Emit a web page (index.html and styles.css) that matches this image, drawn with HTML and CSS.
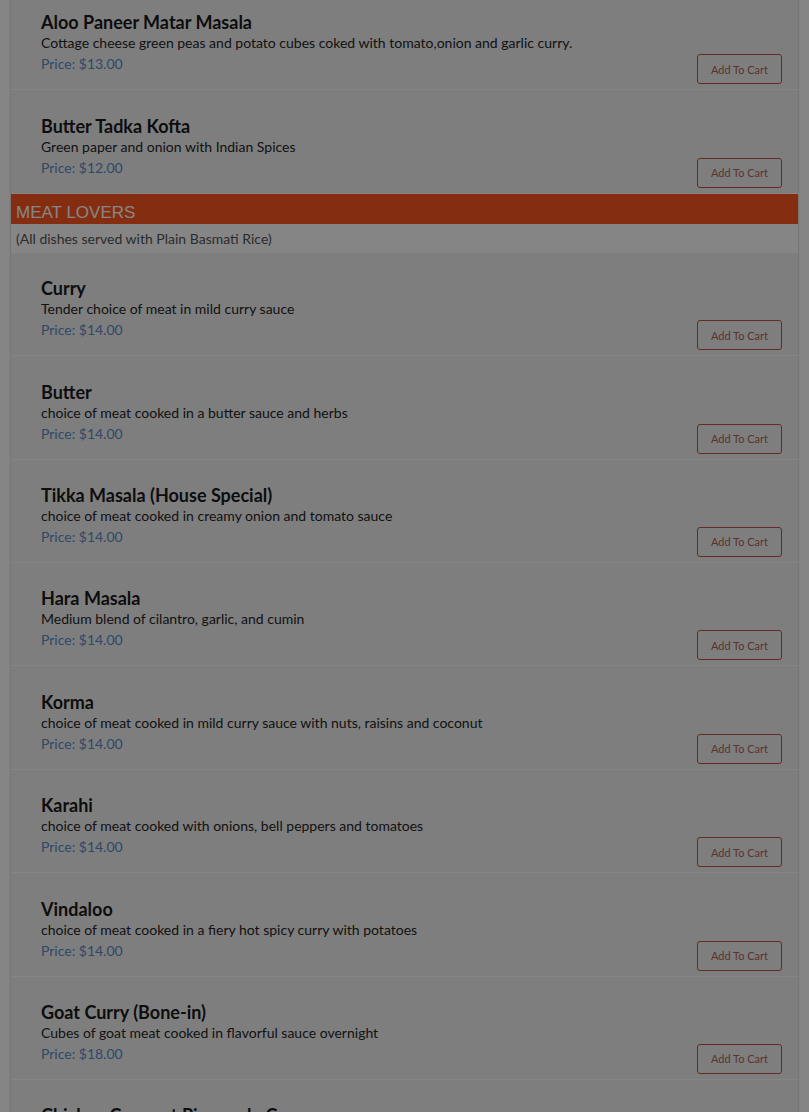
FILE: index.html
```html
<!DOCTYPE html>
<html lang="en">
<head>
    <meta charset="UTF-8">
    <meta name="viewport" content="width=device-width, initial-scale=1.0">
    <title>Menu</title>
    <link rel="stylesheet" href="styles.css">
</head>
<body>
    <div class="menu">
        <div class="dish">
            <div class="dish-info">
                <h3>Aloo Paneer Matar Masala</h3>
                <p class="desc">Cottage cheese green peas and potato cubes coked with tomato,onion and garlic curry.</p>
                <p class="price">Price: $13.00</p>
            </div>
            <button class="add-btn">Add To Cart</button>
        </div>
        <div class="dish">
            <div class="dish-info">
                <h3>Butter Tadka Kofta</h3>
                <p class="desc">Green paper and onion with Indian Spices</p>
                <p class="price">Price: $12.00</p>
            </div>
            <button class="add-btn">Add To Cart</button>
        </div>

        <div class="category">Meat Lovers</div>
        <div class="category-note">(All dishes served with Plain Basmati Rice)</div>

        <div class="dish">
            <div class="dish-info">
                <h3>Curry</h3>
                <p class="desc">Tender choice of meat in mild curry sauce</p>
                <p class="price">Price: $14.00</p>
            </div>
            <button class="add-btn">Add To Cart</button>
        </div>
        <div class="dish">
            <div class="dish-info">
                <h3>Butter</h3>
                <p class="desc">choice of meat cooked in a butter sauce and herbs</p>
                <p class="price">Price: $14.00</p>
            </div>
            <button class="add-btn">Add To Cart</button>
        </div>
        <div class="dish">
            <div class="dish-info">
                <h3>Tikka Masala (House Special)</h3>
                <p class="desc">choice of meat cooked in creamy onion and tomato sauce</p>
                <p class="price">Price: $14.00</p>
            </div>
            <button class="add-btn">Add To Cart</button>
        </div>
        <div class="dish">
            <div class="dish-info">
                <h3>Hara Masala</h3>
                <p class="desc">Medium blend of cilantro, garlic, and cumin</p>
                <p class="price">Price: $14.00</p>
            </div>
            <button class="add-btn">Add To Cart</button>
        </div>
        <div class="dish">
            <div class="dish-info">
                <h3>Korma</h3>
                <p class="desc">choice of meat cooked in mild curry sauce with nuts, raisins and coconut</p>
                <p class="price">Price: $14.00</p>
            </div>
            <button class="add-btn">Add To Cart</button>
        </div>
        <div class="dish">
            <div class="dish-info">
                <h3>Karahi</h3>
                <p class="desc">choice of meat cooked with onions, bell peppers and tomatoes</p>
                <p class="price">Price: $14.00</p>
            </div>
            <button class="add-btn">Add To Cart</button>
        </div>
        <div class="dish">
            <div class="dish-info">
                <h3>Vindaloo</h3>
                <p class="desc">choice of meat cooked in a fiery hot spicy curry with potatoes</p>
                <p class="price">Price: $14.00</p>
            </div>
            <button class="add-btn">Add To Cart</button>
        </div>
        <div class="dish">
            <div class="dish-info">
                <h3>Goat Curry (Bone-in)</h3>
                <p class="desc">Cubes of goat meat cooked in flavorful sauce overnight</p>
                <p class="price">Price: $18.00</p>
            </div>
            <button class="add-btn">Add To Cart</button>
        </div>
        <div class="dish">
            <div class="dish-info">
                <h3>Chicken Coconut Pineapple Curry</h3>
            </div>
        </div>
    </div>

    <!-- modal backdrop -->
    <div class="backdrop"></div>
</body>
</html>
```

FILE: styles.css
```css
body {
    font-family: Lato, "Liberation Sans", sans-serif;
    background-color: #fff;
    margin: 0;
    padding: 0;
    height: 1112px;
    overflow: hidden;
}
.menu {
    margin: -13px 11px 0;
    background-color: #fff;
    box-shadow: 0 0 2px rgba(0, 0, 0, 0.35);
}
.dish {
    display: flex;
    justify-content: space-between;
    align-items: flex-end;
    background-color: #f2f2f2;
    padding: 24.4px 16px 5px 30px;
    margin-bottom: 1px;
}
.dish-info {
    padding-bottom: 10px;
}
.dish-info h3 {
    margin: 0;
    font-size: 18px;
    line-height: 22px;
    color: #1a1a1a;
}
.dish-info p {
    margin: 0;
    font-size: 14px;
    line-height: 20px;
}
.dish-info .price {
    color: #5a8cc8;
    line-height: 21px;
}
.desc {
    color: #262626;
}
.add-btn {
    width: 85px;
    height: 30px;
    padding: 0;
    font-family: inherit;
    font-size: 11px;
    color: #b0625a;
    background: none;
    border: 1px solid #c4524a;
    border-radius: 3px;
    cursor: pointer;
}
.category {
    background-color: #ff5722;
    color: #fff;
    font-family: "Liberation Sans", Arial, sans-serif;
    font-size: 17px;
    text-transform: uppercase;
    height: 30px;
    line-height: 37px;
    padding: 0 5px;
}
.category-note {
    font-size: 14px;
    color: #555;
    height: 29px;
    line-height: 29px;
    padding: 0 5px;
    background-color: #fff;
}
.backdrop {
    position: fixed;
    top: 0;
    left: 0;
    right: 0;
    bottom: 0;
    background-color: rgba(0, 0, 0, 0.48);
}
```
